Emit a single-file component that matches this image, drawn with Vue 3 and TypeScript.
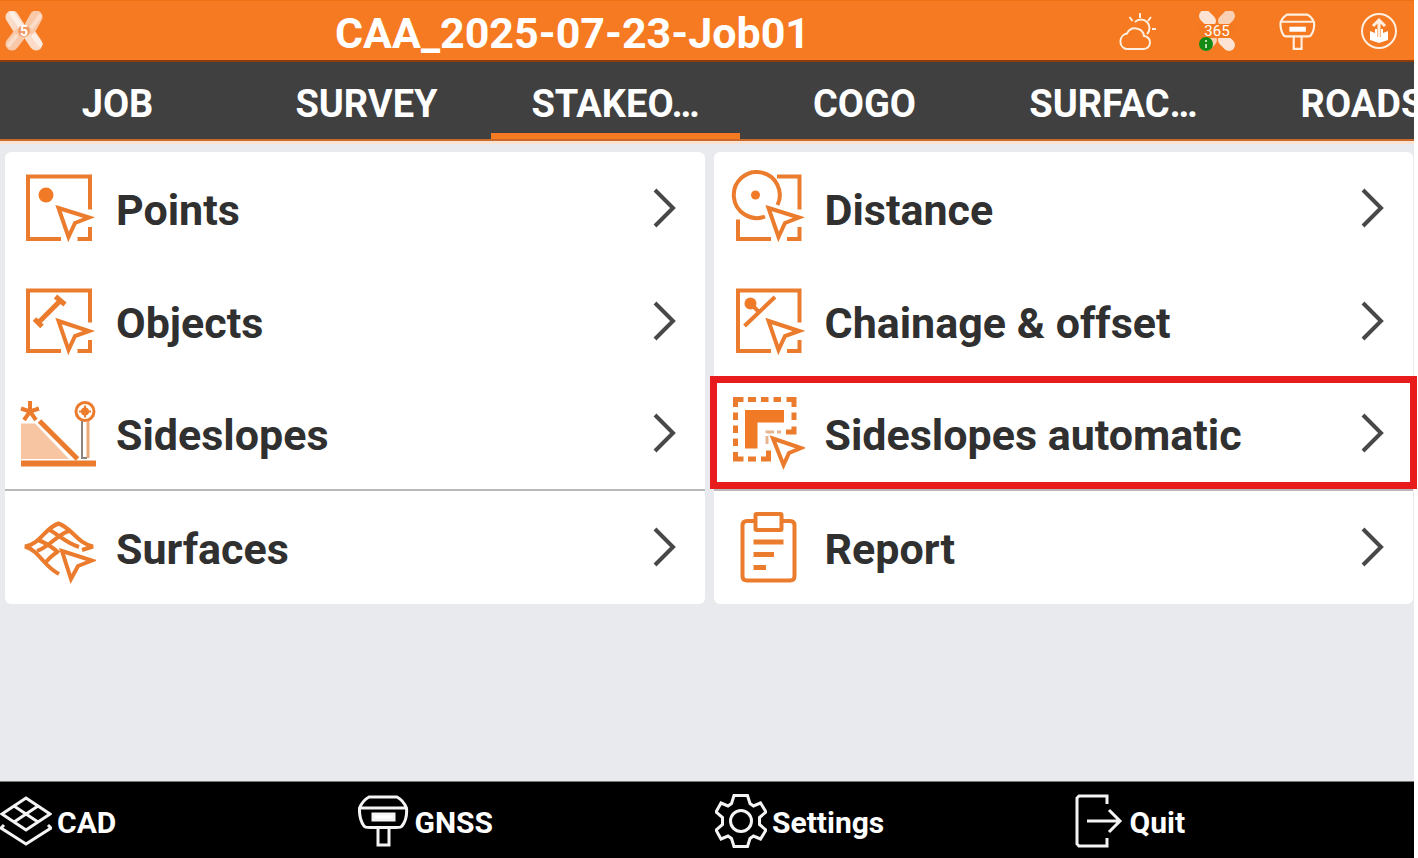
<script setup lang="ts">
import { ref } from 'vue'

interface Entry {
  id: string
  label: string
  divided?: boolean
  marked?: boolean
}

const tabs: string[] = ['JOB', 'SURVEY', 'STAKEO…', 'COGO', 'SURFAC…', 'ROADS']
const activeTab = ref('STAKEO…')

const cards: Entry[][] = [
  [
    { id: 'points', label: 'Points' },
    { id: 'objects', label: 'Objects' },
    { id: 'sideslopes', label: 'Sideslopes', divided: true },
    { id: 'surfaces', label: 'Surfaces' },
  ],
  [
    { id: 'distance', label: 'Distance' },
    { id: 'chainage', label: 'Chainage & offset' },
    { id: 'automatic', label: 'Sideslopes automatic', divided: true, marked: true },
    { id: 'report', label: 'Report' },
  ],
]

const actions: string[] = ['CAD', 'GNSS', 'Settings', 'Quit']
</script>

<template>
  <div class="page">
    <header class="header">
      <svg class="status-icon" viewBox="0 0 40 40" aria-hidden="true">
        <g fill="none" stroke-width="13" stroke-linecap="round">
          <path d="M8 6 15 17M32 33 26 24" stroke="#fbdcc8" />
          <path d="M32 6 26 17M8 33 15 24" stroke="#f9c8a8" />
        </g>
        <path d="M8 3 16 14M30 25 36 33" stroke="#fdeee4" stroke-width="5" stroke-linecap="round" />
        <path d="M36 5 28 16M12 25 5 34" stroke="#fbdcc8" stroke-width="4" stroke-linecap="round" />
        <circle cx="20" cy="20" r="6" fill="#ef9a66" />
        <text x="20" y="25" class="logo-digit">5</text>
      </svg>
      <h1 class="title">CAA_2025-07-23-Job01</h1>
      <div class="status">
        <svg class="status-icon line" viewBox="0 0 40 40" aria-hidden="true">
          <path d="M10 38h17a6.500 6.500 0 0 0 1-13a9 9 0 0 0-17-2.500a8 8 0 0 0-1 15.500z" />
          <path d="M19 11a8 8 0 0 1 12 12" />
          <path d="M24 2v5M13.500 6l3 4M35 6l-3 4M36 18h4" />
        </svg>
        <svg class="status-icon" viewBox="0 0 40 40" aria-hidden="true">
          <g fill="none" stroke-width="12" stroke-linecap="round">
            <path d="M8 5 13 10M32 34 27 29" stroke="#fce3d3" />
            <path d="M32 5 27 10M14 29 9 34" stroke="#fad0b4" />
          </g>
          <rect x="1" y="13" width="38" height="14" fill="#f47a22" />
          <text x="20" y="25" class="logo-number">365</text>
          <circle cx="9" cy="33" r="7" fill="#138a13" />
          <path d="M9 29v2M9 33v4" stroke="#b9e0b0" stroke-width="2" />
        </svg>
        <svg class="status-icon line" viewBox="-1 -3 54 56" aria-hidden="true">
          <g stroke-width="3">
            <path d="M11 2H39Q45 5 48.500 13Q49.500 24 44 31Q43 32.500 38 32.500H12Q7 32.500 6 31Q1 24 1.500 13Q5 5 11 2ZM2 12H48M20 33V50H31V33" />
          </g>
          <rect x="14" y="19" width="23" height="7" fill="#fff" stroke="none" />
        </svg>
        <svg class="status-icon line" viewBox="0 0 40 40" aria-hidden="true">
          <circle cx="20" cy="20" r="17" />
          <path d="M20 27V9M14 15l6-6 6 6" stroke-width="3" />
          <path d="M11 20l5 2v-4h2v8h4v-8h2v4l5-2v9l-9 3-9-3z" fill="#fff" stroke="none" />
        </svg>
      </div>
    </header>

    <nav class="tabs" aria-label="Sections">
      <button
        v-for="tab in tabs"
        :key="tab"
        type="button"
        class="tab"
        :class="{ active: tab === activeTab }"
        @click="activeTab = tab"
      >
        {{ tab }}
      </button>
    </nav>

    <main class="content">
      <section v-for="(card, c) in cards" :key="c" class="card">
        <button
          v-for="entry in card"
          :key="entry.id"
          type="button"
          class="row"
          :class="{ divided: entry.divided, marked: entry.marked }"
        >
          <svg class="row-icon" viewBox="0 0 76 77" aria-hidden="true">
            <g v-if="entry.id === 'points'">
              <path d="M41 69H8V6.500H70V39.500M70 57V69H57.500" />
              <circle cx="26" cy="25" r="7.500" class="solid" />
              <path d="M38.500 38 69 47.500 55 53 48.500 67Z" />
            </g>
            <g v-else-if="entry.id === 'objects'">
              <path d="M41 68H8V7.500H70V39.500M70 57V68H57.500" />
              <path d="M18.500 39.500 40.500 17.500" stroke-width="5" />
              <path d="M35.500 13.500 45 21.500M14.500 36 22 43.500" stroke-width="5" />
              <path d="M38.500 38 69 48 55 53 48.500 67Z" />
            </g>
            <g v-else-if="entry.id === 'sideslopes'">
              <path d="M1 28.500H15L49 64H1Z" fill="#f8c5a3" stroke="none" />
              <path d="M1 68.500H76" stroke-width="6" />
              <path d="M19.500 26 57.500 64" stroke-width="5" />
              <path d="M10 16V6M10 16.500 1 13.500M10 16.500 19 13.500M10 16.500 4 25M10 16.500 16 25" />
              <circle cx="65" cy="16.500" r="9" stroke-width="3" />
              <circle cx="65" cy="16.500" r="4" class="solid" />
              <path d="M65 10.500V22.500M59 16.500H71" stroke-width="2" />
              <path d="M68 26V63" stroke-width="3" stroke="#eba878" />
              <path d="M62 26V63H67" stroke-width="2" stroke="#8d8580" />
            </g>
            <g v-else-if="entry.id === 'surfaces'">
              <path d="M39 65C23 57 20 42 5 37.500C20 35 25 19 38.500 14.500C52 19 58 35 73 37.500L62 41" />
              <path d="M17 42C29 38 38 25 49 22M26 53C30 48 33 46 37 43" />
              <path d="M28 20C39 26 46 34 59 38M18 31C27 34 32 38 39 44" />
              <path d="M42 42 72 51.500 58 57 51 70Z" fill="#fff" />
            </g>
            <g v-else-if="entry.id === 'distance'">
              <path d="M48.500 35A23 23 0 1 0 36 46.500" />
              <circle cx="26.500" cy="25" r="4.500" class="solid" />
              <path d="M48 6.500H70.500V39.500M70.500 57V69H58M42 69H9V49.500" />
              <path d="M39.500 38 70 47.500 56 53 49.500 67Z" />
            </g>
            <g v-else-if="entry.id === 'chainage'">
              <path d="M42 68H9V7.500H70.500V39.500M70.500 57V68H58" />
              <circle cx="21.500" cy="20.500" r="6" class="solid" />
              <path d="M15.500 43 46 14M21.500 20.500 30 29" />
              <path d="M39.500 38 70 48 56 53 49.500 67Z" />
            </g>
            <g v-else-if="entry.id === 'automatic'">
              <path
                stroke-width="5"
                d="M6.500 12V4.500H14.500M19 4.500H27M32 4.500H39.500M44.500 4.500H52M57.500 4.500H65V12M65 17.500V25M65 31.500V37H57M6.500 17.500V25M6.500 30.500V38M6.500 43.500V51M6.500 57V64H14.500M19 64H27M32 64H39.500V55.500"
              />
              <path d="M16 15H55V27.500H28.500V53.500H16Z" class="solid" />
              <path d="M38 49V37H52" stroke-width="3" stroke="#e7b48f" stroke-dasharray="8 3" />
              <path d="M44 43.500 72 53 60 58 54.500 70Z" />
            </g>
            <g v-else>
              <path d="M26 12H18Q13.500 12 13.500 16.500V67Q13.500 71.500 18 71.500H61Q65.500 71.500 65.500 67V16.500Q65.500 12 61 12H53" />
              <rect x="26.500" y="5" width="26" height="16" rx="1" />
              <path d="M24.500 33H54.500M24.500 45.500H45M24.500 58.500H37" stroke-width="5" />
            </g>
          </svg>
          <span class="label">{{ entry.label }}</span>
          <svg class="chevron" viewBox="0 0 24 42" aria-hidden="true">
            <path d="M2 2 20 20 2 38" />
          </svg>
        </button>
      </section>
    </main>

    <footer class="footer">
      <button v-for="action in actions" :key="action" type="button" class="action">
        <svg class="action-icon" viewBox="0 0 52 54" aria-hidden="true">
          <path v-if="action === 'CAD'" d="M26 4 50 20 26 36 2 20ZM14 12 38 28M38 12 14 28M4 31 1 34 26 50 51 34 48 31" />
          <g v-else-if="action === 'GNSS'">
            <path d="M11 3H39Q45 6 48.500 14Q49.500 25 44 32Q43 33.500 38 33.500H12Q7 33.500 6 32Q1 25 1.500 14Q5 6 11 3ZM2 14H48M20 34V51H31V34" />
            <rect x="15" y="20" width="21" height="6" fill="#fff" />
          </g>
          <g v-else-if="action === 'Settings'">
            <path
              d="M19 1.500H32.500L35 9.500 38.500 12 45.500 9 51 18 44.500 23.500V30.500L51 36 45.500 45 38.500 42 35 44.500 32.500 52.500H19L16.500 44.500 13 42 6 45 1 36 7.500 30.500V23.500L1 18 6 9 13 12 16.500 9.500Z"
            />
            <circle cx="26" cy="27" r="10.500" />
          </g>
          <path v-else d="M34 10V2H6L4 4V50L6 52H34V44M14 27H47M36 16 47 27 36 38" />
        </svg>
        <span class="action-label">{{ action }}</span>
      </button>
    </footer>
  </div>
</template>

<style>
body {
  margin: 0;
  background: #fff;
}
</style>

<style scoped>
.page {
  display: flex;
  flex-direction: column;
  min-height: 100vh;
  box-sizing: border-box;
  padding-right: 4px;
  font-family: Roboto, 'Liberation Sans', sans-serif;
  font-weight: 700;
  overflow: hidden;
}

button {
  margin: 0;
  padding: 0;
  border: 0;
  background: none;
  font: inherit;
  color: inherit;
  cursor: pointer;
}

.header {
  display: flex;
  align-items: center;
  height: 62px;
  box-sizing: border-box;
  padding: 0 15px 0 4px;
  background: #f57a21;
  border-top: 1px solid #ee7012;
  border-bottom: 2px solid #8e3c0c;
  color: #fff;
}

.title {
  flex: 1;
  margin: 0;
  padding-top: 4px;
  font-size: 43px;
  line-height: 54px;
  font-weight: 700;
  text-align: center;
}

.status {
  display: flex;
  gap: 41px;
  padding-left: 15px;
}

.status-icon {
  width: 40px;
  height: 40px;
  flex: none;
}

.line {
  fill: none;
  stroke: #ffefe0;
  stroke-width: 2px;
}

.logo-digit {
  font-size: 14px;
  fill: #fff;
  text-anchor: middle;
}

.logo-number {
  font-size: 15px;
  font-weight: 400;
  fill: #fff;
  text-anchor: middle;
}

.tabs {
  display: flex;
  height: 79px;
  box-sizing: border-box;
  background: #404040;
  border-bottom: 2px solid #c96a2a;
  overflow: hidden;
}

.tab {
  flex: 0 0 249px;
  height: 79px;
  box-sizing: border-box;
  border-bottom: 8px solid transparent;
  padding-top: 12px;
  font-size: 38px;
  color: #fff;
}

.tab:first-child {
  margin-left: -7px;
}

.tabs .active {
  border-bottom-color: #f57a21;
}

.content {
  flex: 1;
  display: grid;
  grid-template-columns: 1fr 1fr;
  align-items: start;
  gap: 9px;
  padding: 8px 1px 16px 5px;
  background: #e9eaee;
  border-top: 3px solid #fbe3d3;
}

.card {
  display: flex;
  flex-direction: column;
  background: #fff;
  border-radius: 6px;
}

.row {
  position: relative;
  display: flex;
  align-items: center;
  height: 113px;
  box-sizing: border-box;
  padding: 0 28px 0 15px;
  text-align: left;
  color: #303030;
}

.divided {
  border-bottom: 2px solid #b9b9b9;
}

.marked::after {
  content: '';
  position: absolute;
  inset: -2px -4px 0 -4px;
  border: 7px solid #e81c1c;
}

.row-icon {
  flex: none;
  width: 76px;
  height: 77px;
  margin-right: 20px;
  fill: none;
  stroke: #ec7c2d;
  stroke-width: 4px;
}

.solid {
  fill: #f07a25;
  stroke: none;
}

.label {
  flex: 1;
  padding-top: 3px;
  font-size: 43px;
  line-height: 56px;
  white-space: nowrap;
}

.chevron {
  flex: none;
  width: 24px;
  height: 42px;
  fill: none;
  stroke: #484848;
  stroke-width: 4px;
}

.footer {
  display: grid;
  grid-template-columns: repeat(4, 1fr);
  gap: 16px;
  height: 77px;
  box-sizing: border-box;
  border-top: 1px solid #777;
  background: #000;
  color: #fff;
}

.action {
  display: flex;
  align-items: center;
  gap: 5px;
  padding-top: 2px;
  font-size: 30px;
}

.action-label {
  padding-top: 2px;
}

.action-icon {
  flex: none;
  width: 52px;
  height: 54px;
  fill: none;
  stroke: #f4f4f4;
  stroke-width: 3px;
}
</style>
